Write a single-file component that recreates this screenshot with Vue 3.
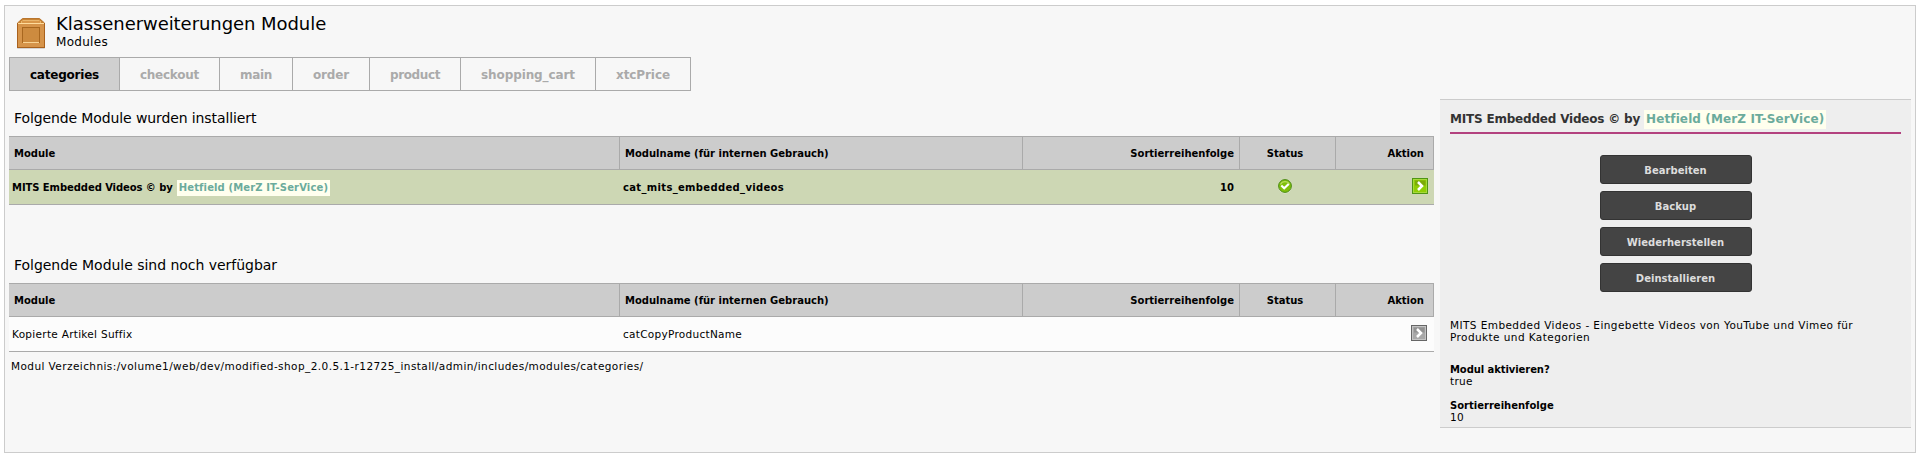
<script setup>
const tabs = [
  { name: 'categories', width: 111, spacing: -0.22 },
  { name: 'checkout', width: 100, spacing: -0.26 },
  { name: 'main', width: 73, spacing: -0.33 },
  { name: 'order', width: 77, spacing: -0.16 },
  { name: 'product', width: 91, spacing: -0.39 },
  { name: 'shopping_cart', width: 135, spacing: -0.09 },
  { name: 'xtcPrice', width: 95, spacing: -0.09 },
]
const columns = ['Module', 'Modulname (für internen Gebrauch)', 'Sortierreihenfolge', 'Status', 'Aktion']
const actions = ['Bearbeiten', 'Backup', 'Wiederherstellen', 'Deinstallieren']
</script>

<template>
  <main class="frame">
    <header class="page-head">
      <svg class="crate" width="30" height="32" viewBox="0 0 30 32">
        <rect x="1" y="28" width="28" height="3" rx="1" fill="#000" opacity=".14" />
        <path d="M6.500 .5h17L28.500 5v2H1.500V5z" fill="#c98433" stroke="#b9762e" />
        <path d="M7 2h16l2 3H5z" fill="#d9974a" />
        <path d="M6.500 2.500h17M5.500 3v2.500M24.500 3v2.500" stroke="#e9b56c" />
        <rect x="1.500" y="5.500" width="27" height="24" fill="#d6944a" stroke="#a9611d" />
        <path d="M2 5.500h26" stroke="#ffdc9c" />
        <rect x="6.500" y="9.500" width="17" height="15" fill="#cd8b3f" stroke="#a8671f" />
        <path d="M7 24.500h16" stroke="#f8d394" />
      </svg>
      <div class="titles">
        <h1>Klassenerweiterungen Module</h1>
        <p>Modules</p>
      </div>
    </header>
    <nav class="tabs">
      <a
        v-for="(tab, i) in tabs" :key="tab.name" :class="{ active: i === 0 }"
        :style="{ width: tab.width + 'px', letterSpacing: tab.spacing + 'px' }"
      >{{ tab.name }}</a>
    </nav>

    <div class="body">
      <section class="lists">
        <h2>Folgende Module wurden installiert</h2>
        <div class="row head"><div v-for="c in columns" :key="c">{{ c }}</div></div>
        <div class="row installed">
          <div><span class="name">MITS Embedded Videos © by</span><span class="vendor">Hetfield (MerZ IT-SerVice)</span></div>
          <div class="code">cat_mits_embedded_videos</div>
          <div>10</div>
          <div>
            <svg class="icon" width="14" height="16" viewBox="0 0 14 16">
              <circle cx="7" cy="9" r="6.500" fill="#fff" opacity=".5" />
              <circle cx="7" cy="8" r="6.400" fill="#7fbf0a" stroke="#4b8a17" />
              <path d="M2.500 6.500a5 5 0 0 1 9 0" fill="none" stroke="#b6dc5a" stroke-width="1.200" />
              <path d="M3.300 7.500l2.900 2.700L10.700 6" fill="none" stroke="#fff" stroke-width="2.200" />
            </svg>
          </div>
          <div>
            <svg class="icon" width="16" height="16" viewBox="0 0 16 16">
              <rect x=".5" y=".5" width="15" height="15" fill="#8fce05" stroke="#4f9614" />
              <rect x="1.500" y="1.500" width="13" height="13" fill="none" stroke="#a7d93c" />
              <path d="M3 2.500h10.500v5H3z" fill="#7cab09" />
              <path d="M6 4l4 4-4 4" fill="none" stroke="#fff" stroke-width="2.500" />
            </svg>
          </div>
        </div>

        <h2 class="second">Folgende Module sind noch verfügbar</h2>
        <div class="row head"><div v-for="c in columns" :key="c">{{ c }}</div></div>
        <div class="row available">
          <div>Kopierte Artikel Suffix</div>
          <div>catCopyProductName</div>
          <div></div>
          <div></div>
          <div>
            <svg class="icon" width="16" height="16" viewBox="0 0 16 16">
              <rect x=".5" y=".5" width="15" height="15" fill="#a8a8a8" stroke="#666" />
              <rect x="1.500" y="1.500" width="13" height="13" fill="none" stroke="#c4c4c4" />
              <path d="M3 2.500h10.500v5H3z" fill="#929292" />
              <path d="M6 4l4 4-4 4" fill="none" stroke="#fff" stroke-width="2.500" />
            </svg>
          </div>
        </div>
        <p class="path">Modul Verzeichnis:/volume1/web/dev/modified-shop_2.0.5.1-r12725_install/admin/includes/modules/categories/</p>
      </section>

      <aside class="panel">
        <h3><span class="name">MITS Embedded Videos © by</span><span class="vendor">Hetfield (MerZ IT-SerVice)</span></h3>
        <div class="actions"><button v-for="a in actions" :key="a">{{ a }}</button></div>
        <p class="desc">MITS Embedded Videos - Eingebette Videos von YouTube und Vimeo für<br>Produkte und Kategorien</p>
        <dl>
          <dt class="tight">Modul aktivieren?</dt><dd>true</dd>
          <dt>Sortierreihenfolge</dt><dd>10</dd>
        </dl>
      </aside>
    </div>
  </main>
</template>

<style>
body { background: #fff; }
</style>

<style scoped>
* { box-sizing: border-box; margin: 0; padding: 0; }
.frame { width: 1912px; height: 448px; margin: 5px 0 0 4px; border: 1px solid #ccc; background: #f7f7f7; font: 10px/12px Verdana, "DejaVu Sans", sans-serif; color: #000; white-space: nowrap; }
.page-head { display: flex; height: 51px; padding: 12px 0 0 11px; }
.titles { padding-left: 10px; }
h1 { font-weight: 400; font-size: 18px; line-height: 20px; margin-top: -4px; letter-spacing: -.06px; }
.titles p { font-size: 12px; line-height: 16px; letter-spacing: .3px; }
.tabs { display: flex; height: 34px; margin-left: 4px; }
.tabs a { border: 1px solid #aaa; border-left-width: 0; font-size: 12px; font-weight: 700; line-height: 34px; text-align: center; color: #aaa; }
.tabs a:first-child { border-left-width: 1px; }
.tabs a.active { background: #d0d0d0; color: #000; }
.body { display: flex; padding-left: 4px; }
.lists { width: 1425px; }
h2 { font-weight: 400; font-size: 14px; line-height: 16px; letter-spacing: -.11px; padding: 19px 0 0 5px; height: 45px; }
h2.second { margin-top: 33px; letter-spacing: -.03px; }
.row { display: grid; grid-template-columns: 611px 403px 217px 96px 98px; border-bottom: 1px solid #aaa; height: 35px; line-height: 34px; }
.row > div { padding: 1px 3px 0; height: 34px; }
.row > :nth-child(3) { text-align: right; padding-right: 6px; }
.row > :nth-child(4) { text-align: center; padding: 0 9px 0 3px; line-height: 32px; }
.row > :nth-child(5) { text-align: right; padding: 0 6px 0 3px; line-height: 32px; }
.row.head { height: 34px; line-height: 33px; border-top: 1px solid #aaa; background: #ccc; font-weight: 700; }
.row.head > div { height: 32px; border-right: 1px solid #aaa; padding: 0 5px; line-height: 33px; }
.row.head > :nth-child(4) { padding-right: 10px; }
.row.head > :nth-child(5) { padding-right: 9px; }
.installed { background: #cdd7b4; font-weight: 700; }
.installed .name { letter-spacing: -.07px; }
.installed .vendor { margin-left: 4px; letter-spacing: .13px; }
.code { letter-spacing: .33px; }
.row.available { background: #fcfcfc; font-size: 10.5px; letter-spacing: .29px; }
.row.available > div { padding-top: 0; }
.row.available > :nth-child(5) { padding-right: 7px; letter-spacing: 0; font-size: 10px; }
.vendor { display: inline-block; background: #ffffee; color: #6bab9c; padding: 0 2px; line-height: 16px; margin-left: 3px; }
.icon { display: inline-block; vertical-align: middle; }
.path { padding: 8px 0 0 2px; font-size: 10.5px; letter-spacing: .42px; }
.panel { width: 471px; height: 329px; margin: 8px 0 0 6px; padding: 10px; border: solid #ccc; border-width: 1px 0; background: #eee; }
h3 { font-size: 12px; line-height: 19px; height: 24px; border-bottom: 2px solid #b3427f; color: #333; }
h3 .name { letter-spacing: -.2px; }
h3 .vendor { line-height: 19px; margin-left: 4px; letter-spacing: .12px; }
.actions { display: flex; flex-direction: column; align-items: center; gap: 7px; padding-top: 21px; }
button { width: 152px; height: 29px; padding-top: 2px; border: 1px solid #333; border-radius: 3px; background: #444; color: #ddd; font: inherit; font-weight: 700; letter-spacing: .02px; }
.desc { padding-top: 27px; font-size: 10.5px; letter-spacing: .42px; }
dl { padding-top: 21px; }
dt { font-weight: 700; }
.tight { letter-spacing: -.08px; }
dd { margin-bottom: 14px; font-size: 10.5px; line-height: 10px; letter-spacing: .3px; }
</style>
